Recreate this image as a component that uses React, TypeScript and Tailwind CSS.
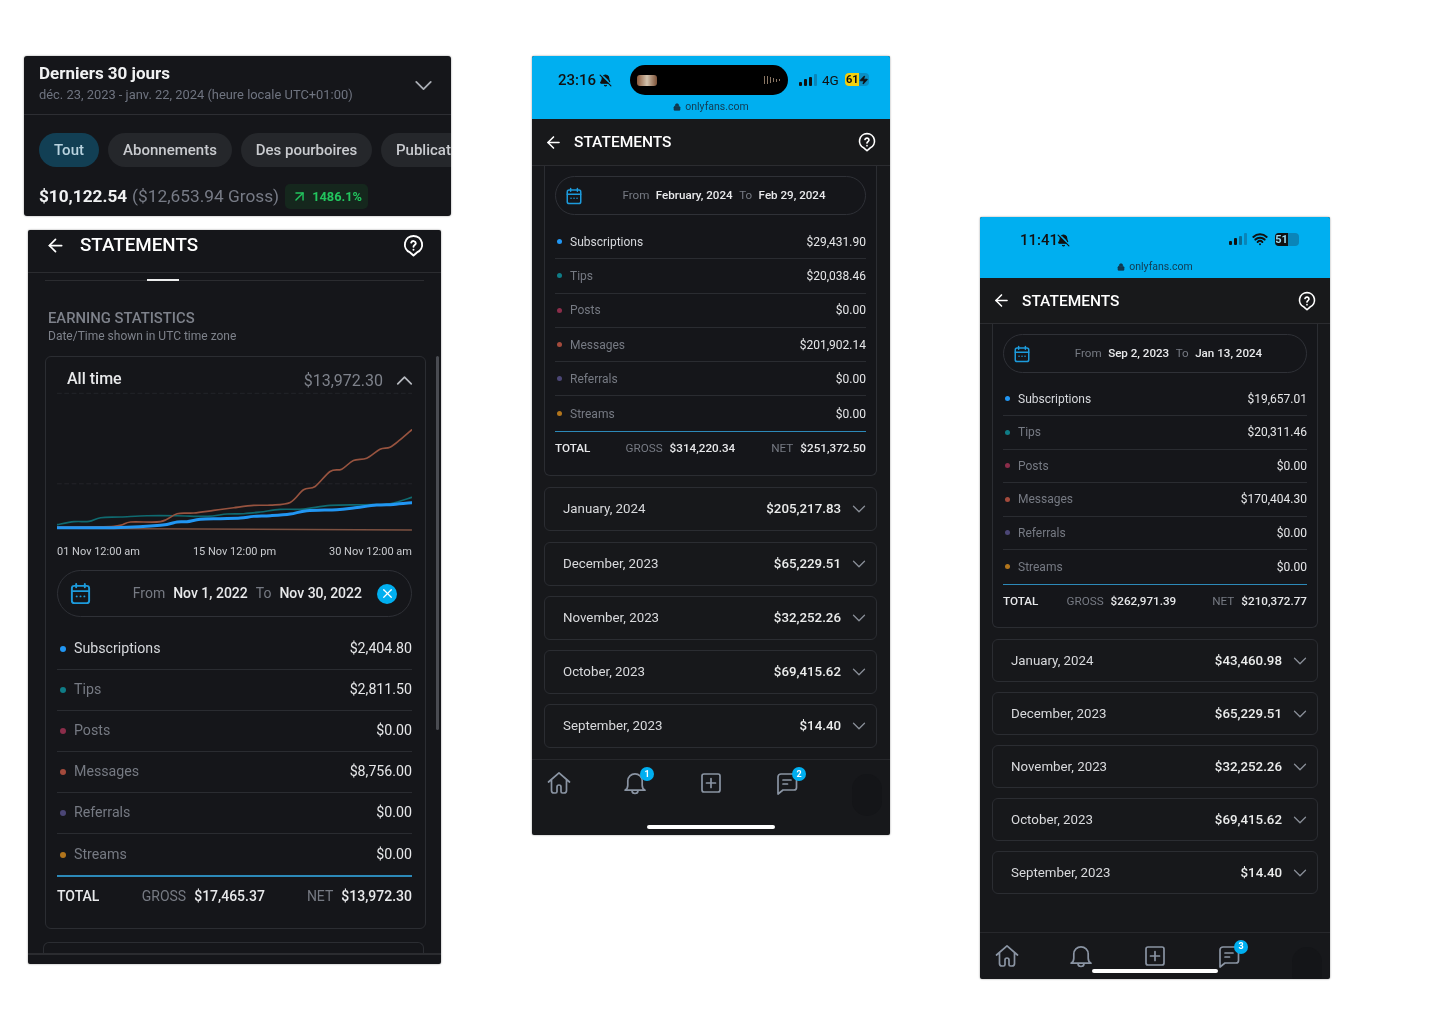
import React from "react";
import { ArrowLeft, ArrowUpRight, BellOff, ChevronDown, ChevronUp, Lock, Wifi, X, Zap } from "lucide-react";

type Row = { label: string; value: string };

const DOTS = ["bg-[#2196f3]", "bg-[#0f7c86]", "bg-[#8b2d4a]", "bg-[#a34a3c]", "bg-[#4b4676]", "bg-[#b2751c]"];

// points read off the reference chart
const brown: number[][] = [[110,412],[280,410],[330,397],[420,396],[470,372],[520,370],[580,362],[640,354],[700,347],[750,346],[810,338],[850,300],[885,290],[930,245],[965,238],[1000,212],[1040,205],[1080,178],[1110,172],[1140,150],[1175,120]];
const teal: number[][] = [[110,405],[160,396],[205,395],[240,384],[300,382],[380,378],[470,378],[560,380],[620,373],[670,372],[720,367],[780,359],[850,358],[930,347],[1030,345],[1110,342],[1175,323]];
const blue: number[][] = [[110,414],[280,414],[420,407],[470,397],[500,396],[540,389],[600,387],[660,385],[700,380],[750,378],[810,373],[860,363],[950,360],[1000,355],[1070,346],[1120,344],[1175,339]];

function smooth(pts: number[][]) {
  let d = `M${pts[0][0]} ${pts[0][1]}`;
  for (let i = 0; i < pts.length - 1; i++) {
    const p0 = pts[Math.max(i - 1, 0)];
    const p1 = pts[i];
    const p2 = pts[i + 1];
    const p3 = pts[Math.min(i + 2, pts.length - 1)];
    d += ` C${p1[0] + (p2[0] - p0[0]) / 6} ${p1[1] + (p2[1] - p0[1]) / 6} ${p2[0] - (p3[0] - p1[0]) / 6} ${p2[1] - (p3[1] - p1[1]) / 6} ${p2[0]} ${p2[1]}`;
  }
  return d;
}

function HelpPin({ size }: { size: number }) {
  return (
    <svg width={size} height={size} viewBox="0 0 24 24" fill="none" stroke="white" strokeWidth="2" strokeLinecap="round" strokeLinejoin="round">
      <path d="M12 2a9 9 0 0 0-3.600 17.250L12 22.500l3.600-3.250A9 9 0 0 0 12 2z" />
      <path d="M9.600 8.900a2.500 2.500 0 0 1 4.800.8c0 1.700-2.400 2-2.400 3.600" />
      <path d="M12 16.300v.1" />
    </svg>
  );
}

function CalendarIcon({ size }: { size: number }) {
  return (
    <svg width={size} height={size} viewBox="0 0 24 24" fill="none" stroke="#1d9bdc" strokeWidth="2" strokeLinecap="round">
      <rect x="3" y="4" width="18" height="18" rx="2.500" />
      <path d="M3 9.500h18M7.500 2v3.500M16.500 2v3.500" />
      <path d="M8 15h.1M12 15h.1M16 15h.1" strokeWidth="2" />
    </svg>
  );
}

function NavIcon({ name }: { name: "home" | "bell" | "plus" | "chat" }) {
  return (
    <svg width="24" height="24" viewBox="0 0 24 24" fill="none" stroke="#8a94a3" strokeWidth="1.700" strokeLinecap="round" strokeLinejoin="round">
      {name === "home" && <path d="M1.500 11 12 1.800 22.500 11M4.500 9v10.500a2.500 2.500 0 0 0 2.500 2.500h1.500a1.500 1.500 0 0 0 1.500-1.500V16a2 2 0 0 1 4 0v4.500a1.500 1.500 0 0 0 1.500 1.500H17a2.500 2.500 0 0 0 2.500-2.500V9" />}
      {name === "bell" && <path d="M2 19.200h20c-1.800-1-2.800-2.600-2.800-5V10a7.200 7.200 0 0 0-14.400 0v4.200c0 2.400-1 4-2.800 5zM9 19.500a3 3 0 0 0 6 0" />}
      {name === "plus" && <path d="M5 3h14a2 2 0 0 1 2 2v14a2 2 0 0 1-2 2H5a2 2 0 0 1-2-2V5a2 2 0 0 1 2-2zM12 7.500v9M7.500 12h9" />}
      {name === "chat" && <path d="M6 3h13a2.500 2.500 0 0 1 2.500 2.500v11a2.500 2.500 0 0 1-2.500 2.500H8l-5 4V6a3 3 0 0 1 3-3zM8 9h8M8 13h4.500" />}
    </svg>
  );
}

function Badge({ n }: { n: number }) {
  return (
    <span className="absolute -top-[4px] -right-[7px] w-[14px] h-[14px] rounded-full bg-[#00aff0] text-white text-[9px] font-bold flex items-center justify-center">
      {n}
    </span>
  );
}

function Signal({ dotted }: { dotted?: boolean }) {
  return (
    <div className="flex items-end gap-[2px] h-[12px]">
      <span className="w-[3px] h-[4px] bg-[#111] rounded-[1px]" />
      <span className="w-[3px] h-[7px] bg-[#111] rounded-[1px]" />
      <span className={`w-[3px] h-[9px] rounded-[1px] ${dotted ? "bg-[#0a6c95]" : "bg-[#111]"}`} />
      <span className="w-[3px] h-[12px] bg-[#0a85b8] rounded-[1px]" />
    </div>
  );
}

function Month({ label, value, heightClass }: { label: string; value: string; heightClass: string }) {
  return (
    <div className={`${heightClass} border border-[#2b2d32] rounded-[6px] flex items-center pl-[18px] pr-[6px] text-[13.3px] text-[#d9dadd]`}>
      <span className="flex-1">{label}</span>
      <span className="font-medium text-[#eceded]">{value}</span>
      <ChevronDown size={22} color="#8a8f98" strokeWidth={1.4} className="ml-[7px]" />
    </div>
  );
}

function StatRows({ rows, rowClass, textClass, dotClass }: { rows: Row[]; rowClass: string; textClass: string; dotClass: string }) {
  return (
    <div>
      {rows.map((r, i) => (
        <div key={r.label} className={`${rowClass} ${textClass} flex items-center ${i < 5 ? "border-b border-[#2a2c31]" : ""}`}>
          <span className={`rounded-full ${dotClass} ${DOTS[i]}`} />
          <span className={`flex-1 ${i === 0 ? "text-[#d6d8dc]" : "text-[#767a83]"}`}>{r.label}</span>
          <span className="text-[#e6e7e9]">{r.value}</span>
        </div>
      ))}
    </div>
  );
}

function BottomNav({ counts, gapClass, navClass, bellBadge }: { counts: number; gapClass: string; navClass: string; bellBadge?: number }) {
  return (
    <div className={`relative border-t border-[#27282c] ${navClass}`}>
      <div className={`flex pl-[15px] ${gapClass} pt-[11px]`}>
        <NavIcon name="home" />
        <div className="relative">
          <NavIcon name="bell" />
          {bellBadge && <Badge n={bellBadge} />}
        </div>
        <NavIcon name="plus" />
        <div className="relative">
          <NavIcon name="chat" />
          <Badge n={counts} />
        </div>
      </div>
      <span className="absolute right-[8px] top-[14px] w-[30px] h-[42px] rounded-full bg-[#141518]" />
    </div>
  );
}

function Phone({
  widthClass, statusHeight, headerClass, bodyClass, status, rows, total, pill, months, rowClass, monthClass, monthGap, listTop, totalClass, nav,
}: {
  widthClass: string;
  statusHeight: string;
  headerClass: string;
  bodyClass: string;
  status: React.ReactNode;
  rows: Row[];
  total: [string, string];
  pill: [string, string];
  months: Row[];
  rowClass: string;
  monthClass: string;
  monthGap: string;
  listTop: string;
  totalClass: string;
  nav: React.ReactNode;
}) {
  return (
    <section className={`${widthClass} bg-[#17181b] rounded-[2px] overflow-hidden shadow-[0_0_2px_rgba(0,0,0,0.45)] relative`}>
      <div className={`${statusHeight} bg-[#00aff0] relative`}>
        {status}
      </div>
      <header className={`${headerClass} border-b border-[#2b2c30] flex items-center pl-[12px] pr-[13px] text-white bg-[#18191b]`}>
        <ArrowLeft size={19} strokeWidth={2} />
        <h2 className="flex-1 ml-[11px] mt-[1.5px] text-[15.5px] font-medium">STATEMENTS</h2>
        <HelpPin size={20} />
      </header>
      <div className={bodyClass}>
        <div className="border-x border-b border-[#2b2d32] rounded-b-[6px] px-[10px] pt-[10px] bg-[#15161a]">
          <div className="h-[39px] rounded-full border border-[#2f3137] flex items-center pl-[9px] text-[11.6px]">
            <CalendarIcon size={18} />
            <div className="flex-1 flex justify-center gap-[6.5px] font-medium text-[#e8e9eb]">
              <span className="text-[#767a83] font-normal">From</span>
              <span>{pill[0]}</span>
              <span className="text-[#767a83] font-normal">To</span>
              <span>{pill[1]}</span>
            </div>
          </div>
          <div className={listTop}>
            <StatRows rows={rows} rowClass={rowClass} textClass="text-[12px]" dotClass="w-[5px] h-[5px] ml-[2px] mr-[8px]" />
          </div>
          <div className="h-[1.5px] bg-[#2c89b8]" />
          <div className={`${totalClass} flex items-start text-[11.7px] leading-[18px]`}>
            <span className="flex-1 font-medium text-[#e6e7e9]">TOTAL</span>
            <span className="text-[#767a83]">GROSS</span>
            <span className="ml-[7px] font-medium text-[#e6e7e9]">{total[0]}</span>
            <span className="ml-[36px] text-[#767a83]">NET</span>
            <span className="ml-[7px] font-medium text-[#e6e7e9]">{total[1]}</span>
          </div>
        </div>
        <div className={`mt-[11px] flex flex-col ${monthGap}`}>
          {months.map((m) => (
            <Month key={m.label} label={m.label} value={m.value} heightClass={monthClass} />
          ))}
        </div>
      </div>
      {nav}
    </section>
  );
}

function AllTimePanel() {
  const rows: Row[] = [
    { label: "Subscriptions", value: "$2,404.80" },
    { label: "Tips", value: "$2,811.50" },
    { label: "Posts", value: "$0.00" },
    { label: "Messages", value: "$8,756.00" },
    { label: "Referrals", value: "$0.00" },
    { label: "Streams", value: "$0.00" },
  ];
  return (
    <section className="ml-[4px] mt-[14px] w-[413px] h-[734px] bg-[#15161a] rounded-[2px] overflow-hidden shadow-[0_0_2px_rgba(0,0,0,0.45)] relative">
      <header className="h-[43px] border-b border-[#2b2c30] flex items-center pl-[17px] pr-[16px] pb-[14px] pt-[2px] text-white">
        <ArrowLeft size={21} strokeWidth={2} />
        <h2 className="flex-1 ml-[14px] text-[18.8px] font-medium">STATEMENTS</h2>
        <HelpPin size={23} />
      </header>
      <div className="relative mt-[7px] mx-[17px] h-px bg-[#2b2c30]">
        <span className="absolute left-[102px] -top-[1px] w-[32px] h-[2px] bg-[#eceded]" />
      </div>
      <div className="ml-[20px] mt-[27px] text-[#7e828b]">
        <h3 className="text-[14.8px] leading-[20px] font-medium">EARNING STATISTICS</h3>
        <p className="text-[12px] leading-[16px]">Date/Time shown in UTC time zone</p>
      </div>
      <div className="ml-[17px] mt-[12px] w-[381px] h-[573px] border border-[#2b2d32] rounded-[6px] pl-[11px] pr-[13px]">
        <div className="h-[33px] pt-[12px] flex items-start pl-[10px] -mr-[6px]">
          <span className="flex-1 text-[16px] leading-[20px] font-medium text-[#e8e9eb]">All time</span>
          <span className="text-[16px] leading-[24px] text-[#7e828b]">$13,972.30</span>
          <ChevronUp size={27} color="#b6b9bf" strokeWidth={1.5} className="ml-[8px] -mt-[2px]" />
        </div>
        <svg className="block w-[355px] h-[143px]" viewBox="110 0 1065 430" fill="none" strokeLinecap="round">
          <path d="M110 10H1175M110 282H1175" stroke="#2a2c31" strokeWidth="2" strokeDasharray="12 10" />
          <path d="M110 416 1175 421" stroke="#7d5141" strokeWidth="4" />
          <path d={smooth(teal)} stroke="#0f6a70" strokeWidth="5" />
          <path d={smooth(brown)} stroke="#97533f" strokeWidth="5" />
          <path d={smooth(blue)} stroke="#2196f3" strokeWidth="9" />
        </svg>
        <div className="mt-[11px] h-[16px] flex justify-between text-[11px] leading-[16px] text-[#c9cbcf]">
          <span>01 Nov 12:00 am</span>
          <span>15 Nov 12:00 pm</span>
          <span>30 Nov 12:00 am</span>
        </div>
        <div className="mt-[10px] h-[47px] rounded-full border border-[#2f3137] flex items-center pl-[11px] pr-[14px] text-[14px]">
          <CalendarIcon size={23} />
          <div className="flex-1 flex justify-end gap-[8px] font-medium text-[#e8e9eb]">
            <span className="text-[#767a83] font-normal">From</span>
            <span>Nov 1, 2022</span>
            <span className="text-[#767a83] font-normal">To</span>
            <span>Nov 30, 2022</span>
          </div>
          <span className="ml-[15px] w-[20px] h-[20px] rounded-full bg-[#00aff0] flex items-center justify-center">
            <X size={15} color="white" />
          </span>
        </div>
        <div className="mt-[12px]">
          <StatRows rows={rows} rowClass="h-[41px]" textClass="text-[14.2px]" dotClass="w-[6px] h-[6px] ml-[3px] mr-[8px]" />
        </div>
        <div className="h-[1.5px] bg-[#2c89b8]" />
        <div className="h-[40px] flex items-center text-[14px]">
          <span className="flex-1 font-medium text-[#e8e9eb]">TOTAL</span>
          <span className="text-[#767a83]">GROSS</span>
          <span className="ml-[8px] font-medium text-[#e8e9eb]">$17,465.37</span>
          <span className="ml-[42px] text-[#767a83]">NET</span>
          <span className="ml-[8px] font-medium text-[#e8e9eb]">$13,972.30</span>
        </div>
      </div>
      <div className="ml-[15px] mt-[13px] w-[381px] h-[11px] border-x border-t border-[#2b2d32] rounded-t-[6px]" />
      <div className="border-t-2 border-[#2b2c30] h-[11px]" />
      <span className="absolute left-[408px] top-[126px] w-[3px] h-[374px] bg-[#4a4c52] rounded-full" />
    </section>
  );
}

function EarningsCard() {
  return (
    <section className="w-[427px] h-[160px] bg-[#15161a] rounded-[3px] overflow-hidden shadow-[0_0_2px_rgba(0,0,0,0.45)]">
      <div className="h-[59px] border-b border-[#2d2e33] flex items-center pl-[15px] pr-[13px]">
        <div className="flex-1 -mt-[2px]">
          <h2 className="text-[17px] leading-[21px] font-bold text-[#f0f1f2]">Derniers 30 jours</h2>
          <p className="text-[12.9px] leading-[21px] text-[#6f7480]">déc. 23, 2023 - janv. 22, 2024 (heure locale UTC+01:00)</p>
        </div>
        <ChevronDown size={29} color="#a9adb4" strokeWidth={1.5} />
      </div>
      <div className="mt-[18px] pl-[15px] flex gap-[9px] whitespace-nowrap text-[15px] font-medium">
        <span className="shrink-0 h-[34px] w-[60px] rounded-full bg-[#123f54] text-[#b9d3df] flex items-center justify-center">Tout</span>
        <span className="shrink-0 h-[34px] w-[124px] rounded-full bg-[#25272b] text-[#c9cbcf] flex items-center justify-center">Abonnements</span>
        <span className="shrink-0 h-[34px] w-[131px] rounded-full bg-[#25272b] text-[#c9cbcf] flex items-center justify-center">Des pourboires</span>
        <span className="shrink-0 h-[34px] pl-[15px] pr-[15px] rounded-full bg-[#25272b] text-[#c9cbcf] flex items-center">Publications</span>
      </div>
      <div className="mt-[17px] pl-[15px] flex items-center">
        <span className="text-[17.2px] font-bold text-[#f0f1f2]">$10,122.54</span>
        <span className="ml-[5px] text-[17.3px] text-[#777b86]">($12,653.94 Gross)</span>
        <span className="ml-[6px] h-[25px] w-[83px] pl-[6px] rounded-[5px] bg-[#15271d] text-[#22c55e] text-[12.8px] font-bold flex items-center gap-[4px]">
          <ArrowUpRight size={17} />
          1486.1%
        </span>
      </div>
    </section>
  );
}

function OnlyfansUrl({ top }: { top: string }) {
  return (
    <div className={`absolute inset-x-0 ${top} flex items-center justify-center gap-[4px] text-[10.5px] text-[#123a50]`}>
      <Lock size={8} fill="#123a50" />
      onlyfans.com
    </div>
  );
}

function StatusFeb() {
  return (
    <>
      <span className="absolute left-[26px] top-[14px] text-[15px] leading-[20px] font-medium text-[#111]">23:16</span>
      <BellOff size={13} color="#111" fill="#111" className="absolute left-[67px] top-[18px]" />
      <div className="absolute left-[98px] top-[9px] w-[158px] h-[30px] rounded-full bg-black flex items-center justify-between pl-[7px] pr-[8px]">
        <span className="w-[20px] h-[11px] rounded-[3px] bg-gradient-to-r from-[#8a5a3c] via-[#d2c2ac] to-[#7c5238]" />
        <span className="flex items-center gap-[1.5px]">
          <span className="w-[1.5px] h-[8px] bg-[#8b7765]" />
          <span className="w-[1.5px] h-[8px] bg-[#8b7765]" />
          <span className="w-[1.5px] h-[6px] bg-[#8b7765]" />
          <span className="w-[1.5px] h-[4px] bg-[#8b7765]" />
          <span className="w-[1.5px] h-[3px] bg-[#8b7765]" />
          <span className="w-[1.5px] h-[2px] bg-[#8b7765]" />
        </span>
      </div>
      <div className="absolute left-[267px] top-[18px]">
        <Signal />
      </div>
      <span className="absolute left-[290px] top-[14px] text-[13.5px] leading-[20px] text-[#111]">4G</span>
      <div className="absolute left-[313px] top-[17px] w-[24px] h-[13px] rounded-[4px] bg-[#0a8fc4] overflow-hidden flex items-center">
        <span className="w-[15px] h-full bg-[#f5d10d] text-[11px] leading-[13px] font-bold text-[#111] text-center">61</span>
        <Zap size={10} color="#111" fill="#111" />
      </div>
    </>
  );
}

function StatusSep() {
  return (
    <>
      <span className="absolute left-[40px] top-[13px] text-[15px] leading-[20px] font-medium text-[#111]">11:41</span>
      <BellOff size={13} color="#111" fill="#111" className="absolute left-[77px] top-[17px]" />
      <div className="absolute left-[249px] top-[16px]">
        <Signal dotted />
      </div>
      <Wifi size={16} color="#111" strokeWidth={3} className="absolute left-[272px] top-[14px]" />
      <div className="absolute left-[295px] top-[16px] w-[24px] h-[13px] rounded-[4px] bg-[#0a85b8] overflow-hidden">
        <span className="block w-[13px] h-full bg-[#111] text-[11px] leading-[13px] font-bold text-[#9adcf3] text-center">51</span>
      </div>
    </>
  );
}

export default function App() {
  const febRows: Row[] = [
    { label: "Subscriptions", value: "$29,431.90" },
    { label: "Tips", value: "$20,038.46" },
    { label: "Posts", value: "$0.00" },
    { label: "Messages", value: "$201,902.14" },
    { label: "Referrals", value: "$0.00" },
    { label: "Streams", value: "$0.00" },
  ];
  const febMonths: Row[] = [
    { label: "January, 2024", value: "$205,217.83" },
    { label: "December, 2023", value: "$65,229.51" },
    { label: "November, 2023", value: "$32,252.26" },
    { label: "October, 2023", value: "$69,415.62" },
    { label: "September, 2023", value: "$14.40" },
  ];
  const sepRows: Row[] = [
    { label: "Subscriptions", value: "$19,657.01" },
    { label: "Tips", value: "$20,311.46" },
    { label: "Posts", value: "$0.00" },
    { label: "Messages", value: "$170,404.30" },
    { label: "Referrals", value: "$0.00" },
    { label: "Streams", value: "$0.00" },
  ];
  const sepMonths: Row[] = [
    { label: "January, 2024", value: "$43,460.98" },
    { label: "December, 2023", value: "$65,229.51" },
    { label: "November, 2023", value: "$32,252.26" },
    { label: "October, 2023", value: "$69,415.62" },
    { label: "September, 2023", value: "$14.40" },
  ];

  return (
    <div className="w-[1440px] h-[1018px] bg-white flex items-start overflow-hidden font-['Roboto',sans-serif] blur-[0.3px]">
      <div className="ml-[24px] mt-[56px] w-[427px]">
        <EarningsCard />
        <AllTimePanel />
      </div>

      <div className="ml-[81px] mt-[56px]">
        <Phone
          widthClass="w-[358px]"
          statusHeight="h-[63px]"
          headerClass="h-[47px]"
          bodyClass="pl-[12px] pr-[13px]"
          status={
            <>
              <StatusFeb />
              <OnlyfansUrl top="top-[43px]" />
            </>
          }
          rows={febRows}
          total={["$314,220.34", "$251,372.50"]}
          pill={["February, 2024", "Feb 29, 2024"]}
          months={febMonths}
          rowClass="h-[34.3px]"
          monthClass="h-[44px]"
          monthGap="gap-[10.25px]"
          listTop="mt-[10px]"
          totalClass="h-[43px] pt-[7px]"
          nav={
            <div className="mt-[11px]">
              <BottomNav counts={2} bellBadge={1} gapClass="gap-[52px]" navClass="h-[76px]" />
              <span className="absolute left-[115px] bottom-[6px] w-[128px] h-[4px] rounded-full bg-white" />
            </div>
          }
        />
      </div>

      <div className="ml-[90px] mt-[217px]">
        <Phone
          widthClass="w-[350px]"
          statusHeight="h-[61px]"
          headerClass="h-[46px]"
          bodyClass="px-[12px]"
          status={
            <>
              <StatusSep />
              <OnlyfansUrl top="top-[42px]" />
            </>
          }
          rows={sepRows}
          total={["$262,971.39", "$210,372.77"]}
          pill={["Sep 2, 2023", "Jan 13, 2024"]}
          months={sepMonths}
          rowClass="h-[33.5px]"
          monthClass="h-[43px]"
          monthGap="gap-[10px]"
          listTop="mt-[9.5px]"
          totalClass="h-[42px] pt-[7px]"
          nav={
            <div className="mt-[38px]">
              <BottomNav counts={3} gapClass="gap-[50px]" navClass="h-[47px]" />
              <span className="absolute left-[112px] bottom-[6px] w-[126px] h-[4px] rounded-full bg-white" />
            </div>
          }
        />
      </div>
    </div>
  );
}
